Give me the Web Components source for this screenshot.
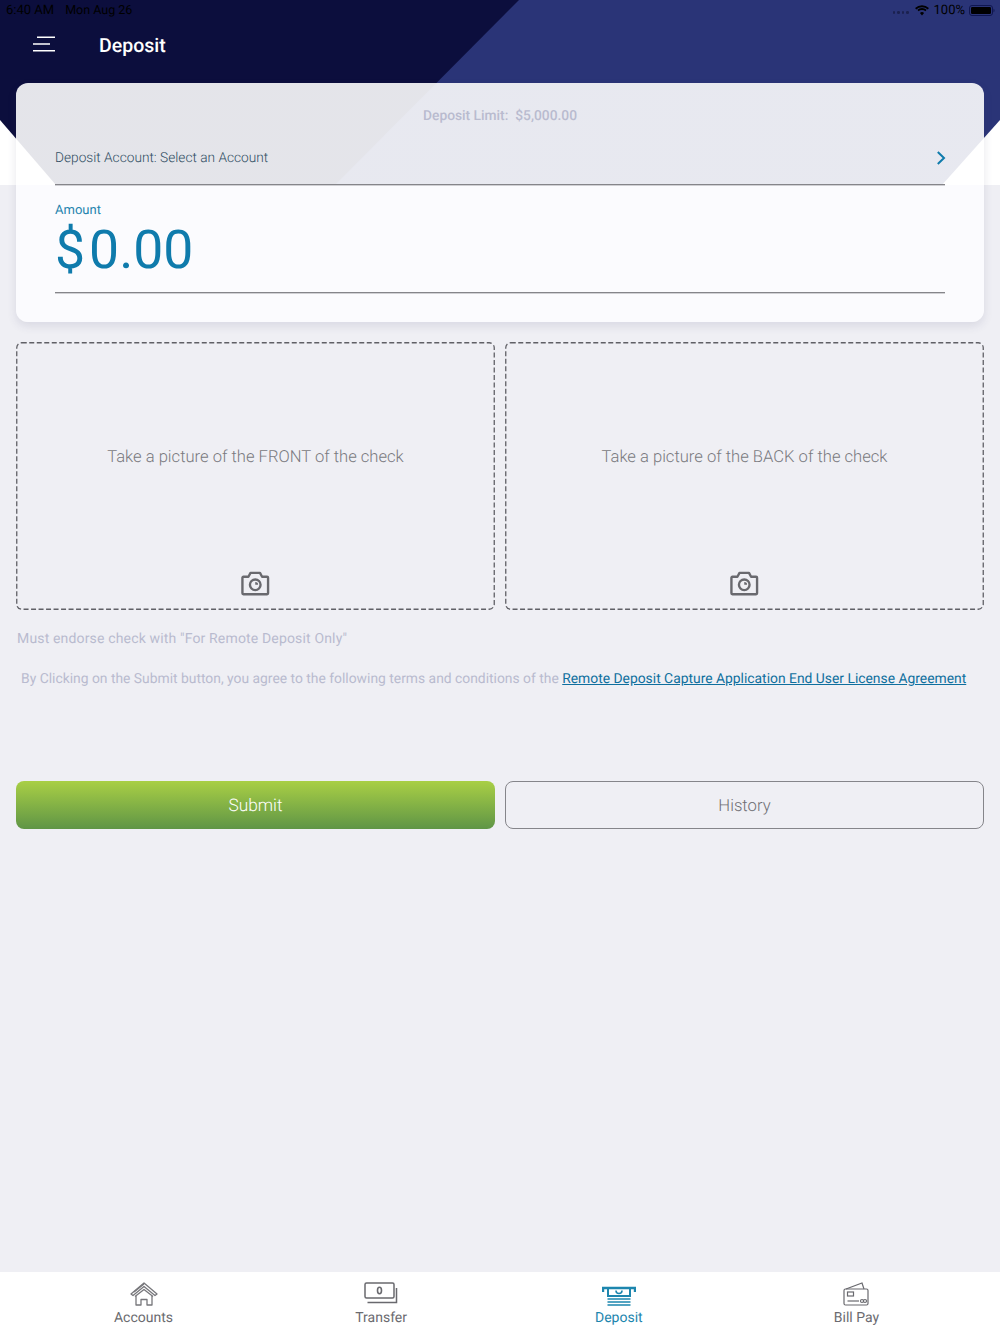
<!DOCTYPE html>
<html lang="en">
<head>
<meta charset="utf-8">
<title>Deposit</title>
<style>
  html, body { margin: 0; height: 100%; }
  body { background: #efeff4; font-family: Roboto, "Liberation Sans", sans-serif; text-rendering: geometricPrecision; }
</style>
</head>
<body>
<deposit-app></deposit-app>

<script>
const ICONS = {
  menu: `<svg width="24" height="16" viewBox="0 0 24 16" fill="none" stroke="#fff" stroke-width="1.4"><path d="M5 1.2H23M1 8H18M1 14.8H23"/></svg>`,
  wifi: `<svg width="14" height="11" viewBox="0 0 15 11"><path d="M7.5 10.8 5.3 8.2a3.3 3.3 0 0 1 4.4 0z M7.5 2.9a7.2 7.2 0 0 1 4.9 1.9l-1.2 1.5a5.4 5.4 0 0 0-7.4 0L2.6 4.8A7.2 7.2 0 0 1 7.5 2.9z M7.5 0a11 11 0 0 1 7.4 2.9l-1.2 1.4a9.2 9.2 0 0 0-12.4 0L.1 2.9A11 11 0 0 1 7.5 0z" fill="#000"/></svg>`,
  battery: `<svg width="26" height="11" viewBox="0 0 26 11"><rect x=".5" y=".5" width="23" height="10" rx="2.5" fill="none" stroke="#0f1650"/><rect x="2" y="2" width="20" height="7" rx="1.2" fill="#000"/><path d="M24.500 3.800c.8.2 1 1 1 1.700s-.2 1.500-1 1.700z" fill="#0f1650"/></svg>`,
  chevron: `<svg width="10" height="14" viewBox="0 0 10 14" fill="none" stroke="#0f7bac" stroke-width="2"><path d="M1.800 1 8 7l-6.200 6"/></svg>`,
  camera: `<svg width="28.500" height="24.700" viewBox="0 0 30 26" fill="none" stroke="#69696e" stroke-width="2.500" stroke-linejoin="round"><path d="M2.500 6h5.300l2.200-4h10l2.200 4h5.300a1 1 0 0 1 1 1v16.500a1 1 0 0 1-1 1h-25a1 1 0 0 1-1-1V7a1 1 0 0 1 1-1z"/><circle cx="15" cy="14.500" r="5.600"/><path d="M15 11.500a3 3 0 0 1 3 3h-3z" fill="#69696e" stroke="none"/></svg>`,
  home: `<svg width="28" height="24" viewBox="0 0 28 24" fill="none" stroke="#77777b" stroke-width="1.300" stroke-linejoin="round"><path d="M1 12 14 1l13 11-2 1.500L14 4.500 3 13.500z"/><path d="M4 10 14 2M5 14.500 14 7.500l9 7"/><path d="M6 14v9h5v-5.500h6V23h5v-9"/></svg>`,
  transfer: `<svg width="34" height="24" viewBox="0 0 34 24" fill="none" stroke="#69696e" stroke-width="1.500"><rect x="1" y="1" width="29" height="15" rx="1.500"/><path d="M3.500 20.500H32.500V6"/><ellipse cx="15.500" cy="8.500" rx="2" ry="3.200" stroke-width="1.600"/></svg>`,
  deposit: `<svg width="34" height="20" viewBox="0 0 34 20" fill="none" stroke="#1d86ae" stroke-width="2"><path d="M1 6V2H33V6" stroke-width="2.400"/><path d="M6 2v8h22V2"/><path d="M14 4.500c0 4 6 4 6 0" stroke-width="1.600"/><path d="M5.500 13H28.500M5.500 16H28.500M5.500 19H28.500" stroke-width="1.500"/></svg>`,
  billpay: `<svg width="26" height="24" viewBox="0 0 26 24" fill="none" stroke="#69696e" stroke-width="1.200"><path d="M3 7 19 1l2 6"/><rect x="1" y="7" width="24" height="16" rx="1.500"/><rect x="4.500" y="10" width="6" height="4"/><path d="M4.500 19H16"/><circle cx="19" cy="19" r="1.500"/><circle cx="22" cy="19" r="1.500"/></svg>`
};

// backdrop behind the header and the top of the card
class HeaderBackdrop extends HTMLElement {
  constructor() {
    super();
    this.attachShadow({ mode: 'open' }).innerHTML = `
      <style>
        :host { display: block; position: absolute; left: 0; top: 0; width: 100%; height: 185px; z-index: 0; }
        svg { display: block; }
      </style>
      <svg width="1000" height="185" viewBox="0 0 1000 185">
        <rect width="1000" height="185" fill="#2a3477"/>
        <polygon points="0,0 519,0 335,185 0,185" fill="#0c0e3d"/>
        <polygon points="0,120 56,185 0,185" fill="#fff"/>
        <polygon points="1000,120 942,185 1000,185" fill="#fff"/>
      </svg>`;
  }
}

class StatusBar extends HTMLElement {
  constructor() {
    super();
    this.attachShadow({ mode: 'open' }).innerHTML = `
      <style>
        :host { display: flex; justify-content: space-between; align-items: center; height: 20px; padding: 0 5px 0 6px;
          font: 400 13px Roboto, "Liberation Sans", sans-serif; color: #000; }
        .side { display: flex; align-items: center; }
        .date { margin-left: 11px; font-size: 12.500px; }
        .dots { display: flex; gap: 2px; margin: 5px 6px 0 0; }
        .dots i { width: 2.500px; height: 2.500px; border-radius: 50%; background: #1b2150; }
        .pct { margin: 0 4px 0 5px; }
      </style>
      <div class="side"><span>6:40 AM</span><span class="date">Mon Aug 26</span></div>
      <div class="side"><span class="dots"><i></i><i></i><i></i><i></i></span>${ICONS.wifi}<span class="pct">100%</span>${ICONS.battery}</div>`;
  }
}

class TopBar extends HTMLElement {
  constructor() {
    super();
    this.attachShadow({ mode: 'open' }).innerHTML = `
      <style>
        :host { display: flex; align-items: center; height: 50px; padding-left: 32px; color: #fff; }
        svg { display: block; margin-top: -3px; }
        h1 { margin: 0 0 0 43px; font: 500 19.500px Roboto, "Liberation Sans", sans-serif; }
      </style>
      ${ICONS.menu}<h1><slot></slot></h1>`;
  }
}

class AmountCard extends HTMLElement {
  constructor() {
    super();
    this.attachShadow({ mode: 'open' }).innerHTML = `
      <style>
        :host { display: block; box-sizing: border-box; height: 239px; margin: 13px 16px 0; padding: 0 39px;
          position: relative; border-radius: 12px; background: linear-gradient(rgba(255,255,255,.89) 102px, #fbfbfe 102px);
          box-shadow: 0 4px 10px rgba(60,60,110,.12); font-family: Roboto, "Liberation Sans", sans-serif; }
        .limit { padding-top: 25px; line-height: 17px; text-align: center; color: #b9bbcf; font-size: 13.800px; font-weight: 500; white-space: pre; }
        .account { display: flex; justify-content: space-between; align-items: center; box-sizing: border-box; height: 60px;
          padding-top: 6px; border-bottom: 1px solid #85858a; box-shadow: 0 1px 0 rgba(130,130,135,.35); color: #2f4d62; font-size: 13.700px; font-weight: 300; }
        .account svg { display: block; position: relative; left: 1px; }
        .label { margin-top: 18px; line-height: 16px; color: #1f84ae; font-size: 13px; }
        .value { height: 73px; line-height: 64px; color: #0f7bac;
          font-size: 53.500px; font-weight: 400; border-bottom: 1px solid #85858a; box-shadow: 0 1px 0 rgba(130,130,135,.35); }
        .cur { margin-right: 4px; }
      </style>
      <div class="limit">Deposit Limit:  $5,000.00</div>
      <div class="account"><span>Deposit Account: Select an Account</span>${ICONS.chevron}</div>
      <div class="label">Amount</div>
      <div class="value"><span class="cur">$</span>0.00</div>`;
  }
}

class CheckCapture extends HTMLElement {
  constructor() {
    super();
    this.attachShadow({ mode: 'open' }).innerHTML = `
      <style>
        :host { display: flex; flex-direction: column; align-items: center; box-sizing: border-box; height: 268px;
          padding-top: 105px; position: relative; color: #7a7a80;
          font: 300 16.600px Roboto, "Liberation Sans", sans-serif; }
        .text { line-height: 22px; }
        .icon { display: block; margin-top: 102px; }
        .icon svg { display: block; }
        .dash { position: absolute; inset: 0; width: 100%; height: 100%; }
        .dash rect { x: .75px; y: .75px; width: calc(100% - 1.5px); height: calc(100% - 1.5px); rx: 5px;
          fill: none; stroke: #606066; stroke-width: 1.3; stroke-dasharray: 5 2.500; }
      </style>
      <svg class="dash"><rect/></svg>
      <div class="text"><slot></slot></div><div class="icon">${ICONS.camera}</div>`;
  }
}

class AppButton extends HTMLElement {
  constructor() {
    super();
    this.attachShadow({ mode: 'open' }).innerHTML = `
      <style>
        :host { display: flex; align-items: center; justify-content: center; box-sizing: border-box; height: 48px; padding-top: 2px;
          border-radius: 8px; font: 300 16.700px Roboto, "Liberation Sans", sans-serif; border: 1px solid #85858a; color: #6f6f75; }
        :host([primary]) { border: 0; padding-top: 1px; color: #fff; font-size: 17.300px; background: linear-gradient(#a9cf45, #5f9546); }
      </style>
      <slot></slot>`;
  }
}

class TabItem extends HTMLElement {
  constructor() {
    super();
    const icon = ICONS[this.getAttribute('icon')];
    this.attachShadow({ mode: 'open' }).innerHTML = `
      <style>
        :host { display: flex; flex-direction: column; align-items: center; width: 120px; color: #6b6b70;
          font: 400 14px Roboto, "Liberation Sans", sans-serif; }
        :host([active]) { color: #1d86ae; }
        .icon { display: flex; align-items: flex-end; justify-content: center; height: 24px; }
        svg { display: block; }
        .label { margin-top: 3.500px; line-height: 17px; }
      </style>
      <div class="icon">${icon}</div><div class="label"><slot></slot></div>`;
  }
}

class TabBar extends HTMLElement {
  constructor() {
    super();
    this.attachShadow({ mode: 'open' }).innerHTML = `
      <style>
        :host { display: grid; grid-template-columns: repeat(4, 120px); justify-content: space-between; box-sizing: border-box;
          height: 62px; padding: 10px 83.500px 0; background: #fff; }
      </style>
      <slot></slot>`;
  }
}

class DepositApp extends HTMLElement {
  constructor() {
    super();
    this.attachShadow({ mode: 'open' }).innerHTML = `
      <style>
        :host { display: flex; flex-direction: column; position: relative; height: 1334px; overflow: hidden;
          font-family: Roboto, "Liberation Sans", sans-serif; }
        .top { position: relative; z-index: 1; }
        main { flex: 1; padding: 20px 16px 0; position: relative; z-index: 1; }
        .pair { display: grid; grid-template-columns: 1fr 1fr; gap: 10px; }
        .note { margin: 20px 0 0 1px; line-height: 18px; font-size: 14px; letter-spacing: .16px; color: #b9bbcf; }
        .terms { margin: 22px 0 0 5px; line-height: 18px; font-size: 13.870px; color: #b9bbcf; white-space: nowrap; }
        a { color: #0f6f9e; text-decoration: underline; }
        .actions { margin-top: 93px; }
      </style>
      <header-backdrop></header-backdrop>
      <div class="top">
        <status-bar></status-bar>
        <top-bar>Deposit</top-bar>
        <amount-card></amount-card>
      </div>
      <main>
        <div class="pair">
          <check-capture>Take a picture of the FRONT of the check</check-capture>
          <check-capture>Take a picture of the BACK of the check</check-capture>
        </div>
        <div class="note">Must endorse check with "For Remote Deposit Only"</div>
        <div class="terms">By Clicking on the Submit button, you agree to the following terms and conditions of the <a href="#">Remote Deposit Capture Application End User License Agreement</a></div>
        <div class="pair actions">
          <app-button primary>Submit</app-button>
          <app-button>History</app-button>
        </div>
      </main>
      <tab-bar>
        <tab-item icon="home">Accounts</tab-item>
        <tab-item icon="transfer">Transfer</tab-item>
        <tab-item icon="deposit" active>Deposit</tab-item>
        <tab-item icon="billpay">Bill Pay</tab-item>
      </tab-bar>`;
  }
}

customElements.define('header-backdrop', HeaderBackdrop);
customElements.define('status-bar', StatusBar);
customElements.define('top-bar', TopBar);
customElements.define('amount-card', AmountCard);
customElements.define('check-capture', CheckCapture);
customElements.define('app-button', AppButton);
customElements.define('tab-item', TabItem);
customElements.define('tab-bar', TabBar);
customElements.define('deposit-app', DepositApp);
</script>
</body>
</html>
